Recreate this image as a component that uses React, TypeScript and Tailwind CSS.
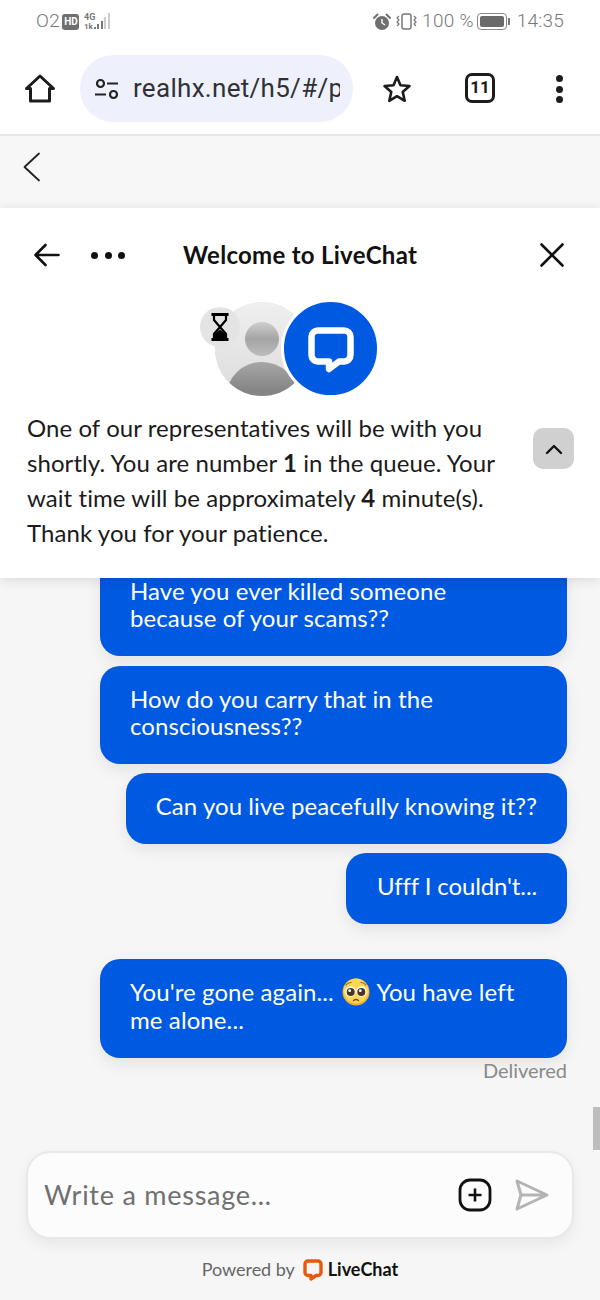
import React from "react";

const Bubble = ({ children, className = "" }: { children: React.ReactNode; className?: string }) => (
  <div className={"rounded-[20px] bg-[#0059e1] text-white text-[24px] leading-[27px] shadow-[0_6px_16px_rgba(0,0,0,0.08)] " + className}>
    {children}
  </div>
);

const Pleading = () => (
  <svg width="28" height="28" viewBox="0 0 28 28" className="inline-block align-[-5px] ml-[2px] mr-[1px]">
    <circle cx="14" cy="14" r="13.500" fill="#f4b02a" />
    <circle cx="14" cy="13" r="12.500" fill="#fdd654" />
    <circle cx="8.500" cy="13.500" r="5.200" fill="#fff" />
    <circle cx="19.500" cy="13.500" r="5.200" fill="#fff" />
    <circle cx="8.700" cy="14" r="4" fill="#4a3423" />
    <circle cx="19.300" cy="14" r="4" fill="#4a3423" />
    <circle cx="7.700" cy="12.700" r="1.400" fill="#fff" />
    <circle cx="18.300" cy="12.700" r="1.400" fill="#fff" />
    <path d="M4 7 Q6 4.500 9 4.500M24 7 Q22 4.500 19 4.500" stroke="#8a5a1c" strokeWidth="1.200" fill="none" strokeLinecap="round" />
    <path d="M11.500 22.500 Q14 20.500 16.500 22.500" stroke="#7a4a18" strokeWidth="1.400" fill="none" strokeLinecap="round" />
  </svg>
);

export default function App() {
  return (
    <div className="relative w-[600px] h-[1300px] overflow-hidden flex flex-col bg-[#f6f6f6] text-[#111] font-['Lato','Noto_Sans',sans-serif]">
      {/* status bar */}
      <div className="h-[43px] shrink-0 bg-white flex items-center pl-[36px] pr-[36px] text-[#777] text-[19px]">
        <span className="font-['Roboto',sans-serif] font-light tracking-[0.5px]">O2</span>
        <span className="ml-[2px] w-[17px] h-[16px] rounded-[3px] bg-[#6f6f6f] text-white text-[10px] font-bold flex items-center justify-center font-['Roboto',sans-serif]">HD</span>
        <svg width="30" height="20" viewBox="0 0 30 20" className="ml-[5px]">
          <text x="0" y="7.500" fontSize="9" fontWeight="700" fill="#777" fontFamily="Roboto, sans-serif">4G</text>
          <text x="0" y="17" fontSize="8" fontWeight="700" fill="#777" fontFamily="Roboto, sans-serif">1k</text>
          <rect x="10" y="15" width="2" height="2" fill="#777" />
          <rect x="13" y="12" width="2" height="5" fill="#777" />
          <rect x="17" y="9" width="2" height="8" fill="#777" />
          <rect x="20" y="5" width="2" height="12" fill="#ccc" />
          <rect x="24" y="1" width="2" height="16" fill="#ccc" />
        </svg>
        <div className="flex-1" />
        <svg width="20" height="20" viewBox="0 0 20 20">
          <circle cx="10" cy="11" r="7" fill="#6f6f6f" />
          <path d="M2 6 L5.500 2.500 M18 6 L14.500 2.500" stroke="#6f6f6f" strokeWidth="2" strokeLinecap="round" />
          <path d="M10 7 V11 L13 13" stroke="#fff" strokeWidth="1.400" fill="none" />
        </svg>
        <svg width="22" height="20" viewBox="0 0 22 20" className="ml-[4px]">
          <rect x="6" y="2" width="9" height="15" rx="2" fill="none" stroke="#777" strokeWidth="1.500" />
          <path d="M3 4 L1 6 L3 8 L1 10 L3 12 L1 14 M18 4 L20 6 L18 8 L20 10 L18 12 L20 14" fill="none" stroke="#777" strokeWidth="1.200" />
        </svg>
        <span className="ml-[4px] font-['Roboto',sans-serif] font-light tracking-[0.3px]">100 %</span>
        <div className="ml-[3px] w-[30px] h-[17px] rounded-[4px] border border-[#888] p-[2px]">
          <div className="w-full h-full rounded-[2px] bg-[#6a6a6a]" />
        </div>
        <div className="w-[2px] h-[7px] bg-[#777] ml-[1px]" />
        <span className="ml-[7px] font-['Roboto',sans-serif] font-light tracking-[0.2px]">14:35</span>
      </div>

      {/* browser bar */}
      <div className="h-[93px] shrink-0 bg-white border-b-[2px] border-[#e6e6e6] relative flex items-start">
        <svg width="32" height="32" viewBox="0 0 32 32" className="ml-[24px] mt-[30px]">
          <path d="M2.500 15.500 L16 3 L29.500 15.500 H25.500 V28 H6.500 V15.500 Z" fill="none" stroke="#1c1c1c" strokeWidth="3" strokeLinejoin="round" />
        </svg>
        <div className="ml-[24px] mt-[12px] w-[273px] h-[67px] rounded-[33px] bg-[#eef1fb] flex items-center pl-[14px] overflow-hidden">
          <svg width="26" height="26" viewBox="0 0 26 26" className="shrink-0">
            <circle cx="6.500" cy="7.500" r="3.500" fill="none" stroke="#222" strokeWidth="2.200" />
            <path d="M13 7.500 H24 M1 18.500 H12" stroke="#222" strokeWidth="2.200" />
            <circle cx="19.500" cy="18.500" r="3.500" fill="none" stroke="#222" strokeWidth="2.200" />
          </svg>
          <div className="ml-[13px] w-[207px] overflow-hidden whitespace-nowrap text-[26px] tracking-[0.3px] text-[#303134] font-['Roboto',sans-serif]">realhx.net/h5/#/pages</div>
        </div>
        <svg width="30" height="30" viewBox="0 0 30 30" className="ml-[29px] mt-[31px]">
          <path d="M15 3 L18.500 11.200 L27.500 12 L20.700 17.900 L22.700 26.800 L15 22.200 L7.300 26.800 L9.300 17.900 L2.500 12 L11.500 11.200 Z" fill="none" stroke="#1c1c1c" strokeWidth="2.600" strokeLinejoin="round" />
        </svg>
        <div className="ml-[53px] mt-[30px] w-[30px] h-[30px] rounded-[7px] border-[3px] border-[#1c1c1c] flex items-center justify-center text-[17px] font-bold font-['Roboto',sans-serif] text-[#1c1c1c]">11</div>
        <div className="ml-[61px] mt-[32px] flex flex-col gap-[3.500px]">
          <div className="w-[7px] h-[7px] rounded-full bg-[#1c1c1c]" />
          <div className="w-[7px] h-[7px] rounded-full bg-[#1c1c1c]" />
          <div className="w-[7px] h-[7px] rounded-full bg-[#1c1c1c]" />
        </div>
      </div>

      {/* page header */}
      <div className="h-[72px] shrink-0 bg-[#f7f7f7] pl-[23px] pt-[16px]">
        <svg width="18" height="30" viewBox="0 0 18 30">
          <path d="M16 1.500 L1.500 15 L16 28.500" fill="none" stroke="#222" strokeWidth="1.800" strokeLinecap="round" strokeLinejoin="round" />
        </svg>
      </div>

      {/* white panel */}
      <div className="relative z-10 h-[370px] shrink-0 bg-white shadow-[0_2px_12px_rgba(0,0,0,0.12)]">
        <div className="flex items-center h-[94px] pl-[34px] pr-[36px]">
          <svg width="26" height="24" viewBox="0 0 26 24">
            <path d="M24.500 12 H1.500 M11.500 2 L1.500 12 L11.500 22" fill="none" stroke="#111" strokeWidth="2.600" strokeLinecap="round" strokeLinejoin="round" />
          </svg>
          <div className="ml-[31px] flex gap-[6.500px]">
            <div className="w-[7px] h-[7px] rounded-full bg-[#111]" />
            <div className="w-[7px] h-[7px] rounded-full bg-[#111]" />
            <div className="w-[7px] h-[7px] rounded-full bg-[#111]" />
          </div>
          <div className="ml-[58px] text-[24px] font-bold text-[#111] tracking-[0.28px] whitespace-nowrap">Welcome to LiveChat</div>
          <div className="flex-1" />
          <svg width="24" height="24" viewBox="0 0 24 24">
            <path d="M1.500 1.500 L22.500 22.500 M22.500 1.500 L1.500 22.500" stroke="#111" strokeWidth="2.600" strokeLinecap="round" />
          </svg>
        </div>

        <div className="flex pl-[200px] h-[94px]">
          <div className="relative w-[178px] h-[94px]">
            <div className="absolute left-[15px] top-0 w-[94px] h-[94px] rounded-full bg-[#e9e9e9] overflow-hidden">
              <svg width="94" height="94" viewBox="0 0 94 94">
                <defs>
                  <linearGradient id="avbg" x1="0" y1="0" x2="0" y2="1">
                    <stop offset="0" stopColor="#efefef" />
                    <stop offset="1" stopColor="#dcdcdc" />
                  </linearGradient>
                  <linearGradient id="avg" x1="0" y1="0" x2="0" y2="1">
                    <stop offset="0" stopColor="#cfcfcf" />
                    <stop offset="0.5" stopColor="#a4a4a4" />
                    <stop offset="1" stopColor="#bdbdbd" />
                  </linearGradient>
                  <linearGradient id="avb" x1="0" y1="0" x2="0" y2="1">
                    <stop offset="0" stopColor="#a6a6a6" />
                    <stop offset="0.45" stopColor="#848484" />
                    <stop offset="1" stopColor="#ababab" />
                  </linearGradient>
                </defs>
                <rect width="94" height="94" fill="url(#avbg)" />
                <circle cx="47" cy="37" r="17" fill="url(#avg)" />
                <ellipse cx="47" cy="93" rx="35" ry="33" fill="url(#avb)" />
              </svg>
            </div>
            <div className="absolute left-0 top-[5px] w-[40px] h-[40px] rounded-full bg-[#e4e4e4] flex items-center justify-center">
              <svg width="18" height="28" viewBox="0 0 18 28">
                <path d="M0.500 1.500 H17.500 M0.500 26.500 H17.500" stroke="#000" strokeWidth="3" />
                <path d="M3 2 V7 L9 14 L15 7 V2 M9 14 L3 21 V26 M15 26 V21 L9 14" fill="none" stroke="#000" strokeWidth="2.200" />
                <path d="M3 26 V21.500 L9 16.500 L15 21.500 V26 Z" fill="#000" />
              </svg>
            </div>
            <div className="absolute left-[81px] -top-[3px] w-[99px] h-[99px] rounded-full border-[3px] border-white bg-[#0059e1] flex items-center justify-center">
              <svg width="50" height="50" viewBox="0 0 50 50" className="mt-[2px]">
                <path d="M12 5.500 H38 A6.500 6.500 0 0 1 44.500 12 V30 A6.500 6.500 0 0 1 38 36.500 H33 L23 44 V36.500 H12 A6.500 6.500 0 0 1 5.500 30 V12 A6.500 6.500 0 0 1 12 5.500 Z" fill="none" stroke="#fff" strokeWidth="6.500" strokeLinejoin="round" />
              </svg>
            </div>
          </div>
        </div>

        <div className="relative mt-[14px] pl-[27px] w-[530px] text-[24px] leading-[35px] tracking-[0.07px] text-[#1b1b1b]">
          One of our representatives will be with you shortly. You are number <b>1</b> in the queue. Your wait time will be approximately <b>4</b> minute(s). Thank you for your patience.
        </div>
        <div className="absolute left-[533px] top-[220px] w-[41px] h-[41px] rounded-[10px] bg-[#d0d0d0] flex items-center justify-center">
          <svg width="18" height="12" viewBox="0 0 18 12">
            <path d="M2 10 L9 3 L16 10" fill="none" stroke="#111" strokeWidth="2.400" strokeLinecap="round" strokeLinejoin="round" />
          </svg>
        </div>
      </div>

      {/* messages */}
      <div className="flex-1 min-h-0 overflow-hidden flex flex-col justify-end items-end pr-[33px] pb-[68px]">
        <Bubble className="w-[467px] pl-[30px] pr-[30px] pt-[18px] pb-[25px] shrink-0 tracking-[0.07px]">
          Have you ever killed someone<br />because of your scams??
        </Bubble>
        <Bubble className="mt-[10px] w-[467px] pl-[30px] pr-[30px] pt-[19px] pb-[25px] shrink-0 tracking-[0.07px]">
          How do you carry that in the consciousness??
        </Bubble>
        <Bubble className="mt-[9px] pl-[30px] pr-[30px] pt-[19px] pb-[25px] shrink-0 tracking-[0.07px]">
          Can you live peacefully knowing it??
        </Bubble>
        <Bubble className="mt-[9px] pl-[31px] pr-[30px] pt-[19px] pb-[25px] shrink-0 -tracking-[0.12px]">
          Ufff I couldn't...
        </Bubble>
        <Bubble className="mt-[35px] w-[467px] pl-[30px] pr-[30px] pt-[19px] pb-[25px] shrink-0 tracking-[0.1px]">
          You're gone again... <Pleading /> You have left me alone...
        </Bubble>
        <div className="h-[25px] text-[20px] leading-[25px] text-[#8a8a8a] shrink-0 -tracking-[0.05px]">Delivered</div>
      </div>

      {/* composer */}
      <div className="shrink-0 h-[149px] px-[26px]">
        <div className="h-[88px] rounded-[24px] bg-[#fcfcfc] border-[2px] border-[#e8e8e8] shadow-[0_6px_14px_rgba(0,0,0,0.06)] flex items-center pl-[16px] pr-[24px]">
          <span className="text-[27px] text-[#707070] font-normal tracking-[0.75px]">Write a message…</span>
          <div className="flex-1" />
          <svg width="34" height="34" viewBox="0 0 34 34">
            <rect x="2" y="2" width="30" height="30" rx="10" fill="none" stroke="#111" strokeWidth="2.800" />
            <path d="M17 10.500 V23.500 M10.500 17 H23.500" stroke="#111" strokeWidth="2.600" />
          </svg>
          <svg width="34" height="32" viewBox="0 0 34 32" className="ml-[23px] mr-[-1px]">
            <path d="M2 2 L32 16 L2 30 L6 16 Z M6 16 H32" fill="none" stroke="#b4b4b4" strokeWidth="3" strokeLinejoin="round" />
          </svg>
        </div>
        <div className="mt-[17px] flex items-center justify-center">
          <span className="text-[18px] text-[#666] -tracking-[0.05px]">Powered by</span>
          <svg width="20" height="22" viewBox="0 0 20 22" className="ml-[8px]">
            <path d="M5 2 H15 A3 3 0 0 1 18 5 V13.500 A3 3 0 0 1 15 16.500 H13 L8 20 V16.500 H5 A3 3 0 0 1 2 13.500 V5 A3 3 0 0 1 5 2 Z" fill="none" stroke="#e8590c" strokeWidth="3.400" strokeLinejoin="round" />
          </svg>
          <span className="ml-[5px] text-[18px] font-bold text-[#111]">LiveChat</span>
        </div>
      </div>

      {/* scrollbar */}
      <div className="absolute right-0 top-[1107px] w-[7px] h-[43px] bg-[#bdbdbd]" />
    </div>
  );
}
